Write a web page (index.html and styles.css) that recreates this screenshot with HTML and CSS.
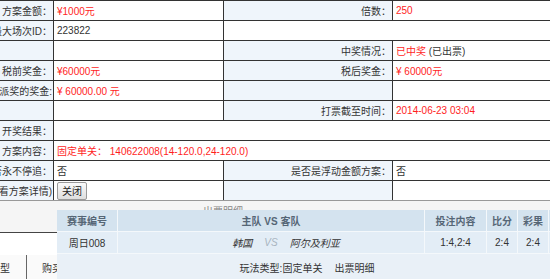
FILE: index.html
```html
<!DOCTYPE html>
<html lang="zh-CN">

<head>
  <meta charset="UTF-8" />
  <title>方案详情</title>
  <meta name="viewport" content="width=device-width, initial-scale=1.0" />
  <link rel="stylesheet" href="styles.css">
</head>

<body>

  <!-- Scheme info table -->
  <table class="info">
    <colgroup>
      <col class="col-label">
      <col class="col-value">
      <col class="col-label2">
      <col class="col-value2">
    </colgroup>
    <tr>
      <td class="label">方案金额：</td>
      <td class="red">¥1000元</td>
      <td class="label">倍数：</td>
      <td class="red">250</td>
    </tr>
    <tr>
      <td class="label">出票最大场次ID：</td>
      <td>223822</td>
      <td colspan="2"></td>
    </tr>
    <tr>
      <td class="label"></td>
      <td></td>
      <td class="label">中奖情况：</td>
      <td><span class="red">已中奖</span> (已出票)</td>
    </tr>
    <tr class="soft">
      <td class="label">税前奖金：</td>
      <td class="red">¥60000元</td>
      <td class="label">税后奖金：</td>
      <td class="red">¥ 60000元</td>
    </tr>
    <tr class="soft">
      <td class="label">应派奖的奖金:</td>
      <td class="red">¥ 60000.00 元</td>
      <td class="label"></td>
      <td></td>
    </tr>
    <tr>
      <td class="label"></td>
      <td></td>
      <td class="label">打票截至时间：</td>
      <td class="red">2014-06-23 03:04</td>
    </tr>
    <tr>
      <td class="label">开奖结果：</td>
      <td colspan="3"></td>
    </tr>
    <tr>
      <td class="label">方案内容：</td>
      <td colspan="3" class="red">固定单关： 140622008(14-120.0,24-120.0)</td>
    </tr>
    <tr>
      <td class="label">是否永不停追：</td>
      <td>否</td>
      <td class="label">是否是浮动金额方案：</td>
      <td>否</td>
    </tr>
    <tr class="last">
      <td class="label">(查看方案详情)</td>
      <td><button class="btn">关闭</button></td>
      <td class="label"></td>
      <td></td>
    </tr>
  </table>

  <!-- Ticket detail area (partly covered by popup) -->
  <div class="ticket-area">
    <div class="ticket-title">出票明细</div>
  </div>
  <div class="ticket-gap"></div>
  <table class="buy">
    <tr>
      <th class="buy-type">类型</th>
      <th class="buy-way">购买方式</th>
    </tr>
  </table>

  <!-- Match popup -->
  <div class="match-pop">
    <table class="match">
      <tr>
        <th class="m-no">赛事编号</th>
        <th class="m-teams">主队 VS 客队</th>
        <th class="m-bet">投注内容</th>
        <th class="m-score">比分</th>
        <th class="m-score">彩果</th>
        <th></th>
      </tr>
      <tr>
        <td>周日008</td>
        <td>
          <div class="teams">
            <span class="home">韩国</span>
            <span class="vs">VS</span>
            <span class="away">阿尔及利亚</span>
          </div>
        </td>
        <td>1:4,2:4</td>
        <td>2:4</td>
        <td>2:4</td>
        <td></td>
      </tr>
    </table>
    <div class="play-type">玩法类型:固定单关<span class="play-link">出票明细</span></div>
  </div>

</body>

</html>
```

FILE: styles.css
```css
:root {
  --line: #333;
  --label-bg: #eff5fb;
  --red: #ff1e1e;
  --text: #333;
}

body {
  margin: 0;
  overflow: hidden;
  font-family: "Liberation Sans", "Noto Sans CJK SC", sans-serif;
  font-size: 10px;
  color: var(--text);
  background-color: #fff;
}

.info {
  border-collapse: collapse;
  table-layout: fixed;
  width: 640px;
  margin-left: -47px;
  border-top: 1px solid var(--line);
}

.col-label {
  width: 100px;
}

.col-value {
  width: 170px;
}

.col-label2 {
  width: 169px;
}

.info td {
  height: 19px;
  padding: 0 3px;
  border: 1px solid var(--line);
  white-space: nowrap;
  overflow: hidden;
}

.info td.label {
  background-color: var(--label-bg);
  text-align: right;
  padding-right: 1px;
}

.info tr.soft td {
  border-top-color: #888;
}

.info tr.last td {
  border-bottom-color: #999;
}

.red {
  color: var(--red);
}

.btn {
  font-family: inherit;
  font-size: 10px;
  color: #222;
  height: 18px;
  padding: 0 4px;
  border: 1px solid #9a9a9a;
  border-radius: 2px;
  background: linear-gradient(#fafafa, #dedede);
}

.ticket-area {
  height: 31px;
  background-color: #f5f5f5;
  border-bottom: 1px solid #444;
}

.ticket-title {
  padding: 2px 0 0 203px;
  color: #888;
}

.ticket-gap {
  height: 22px;
}

.buy {
  border-collapse: collapse;
  margin-left: -22px;
}

.buy th {
  font-weight: normal;
  height: 24px;
  padding: 0;
  text-align: left;
  background-color: #fafafa;
}

.buy th.buy-type {
  width: 32px;
  text-align: right;
  padding: 0 16px 0 0;
  border-right: 1px solid #666;
}

.buy th.buy-way {
  padding-left: 15px;
}

/* Popup with the match list */
.match-pop {
  position: absolute;
  left: 57px;
  top: 210px;
  width: 500px;
  height: 80px;
  background-color: #e9f0f7;
}

.match {
  width: 100%;
  border-collapse: collapse;
  table-layout: fixed;
}

.match th,
.match td {
  height: 21px;
  padding: 0;
  text-align: center;
  border-right: 1px solid #f4f8fb;
  border-bottom: 1px solid #f4f8fb;
  white-space: nowrap;
}

.match th {
  background-color: #d4e3ef;
  color: #566676;
  font-weight: bold;
}

.match td {
  background-color: #e3edf6;
  color: #333;
}

.m-no {
  width: 60px;
}

.m-teams {
  width: 306px;
}

.m-bet {
  width: 61px;
}

.m-score {
  width: 30px;
}

.teams {
  display: flex;
  align-items: center;
}

.teams .home,
.teams .away {
  flex: 1;
  font-style: italic;
}

.teams .home {
  text-align: right;
}

.teams .away {
  text-align: left;
}

.teams .vs {
  margin: 0 12px;
  color: #a8b4c0;
  font-style: italic;
}

.play-type {
  padding-top: 6px;
  text-align: center;
  color: #333;
}

.play-link {
  margin-left: 12px;
}
```
